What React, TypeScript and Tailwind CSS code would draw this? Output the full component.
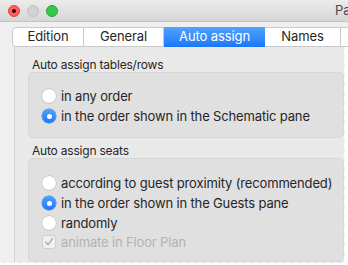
import React from "react";

function Radio({ checked }: { checked?: boolean }) {
  if (checked) {
    return (
      <span className="w-[14px] h-[14px] rounded-full bg-gradient-to-b from-[#4ea1fd] to-[#1a78fa] flex items-center justify-center shrink-0 shadow-[0_0_0_0.5px_#2a74e0]">
        <span className="w-[5px] h-[5px] rounded-full bg-white" />
      </span>
    );
  }
  return (
    <span className="w-[14px] h-[14px] rounded-full bg-white shrink-0 shadow-[0_0_0_0.5px_#b8b8b8,0_0.5px_1px_rgba(0,0,0,0.15)]" />
  );
}

function Row({ checked, label }: { checked?: boolean; label: string }) {
  return (
    <div className="h-[20px] flex items-center gap-[5px] pl-[13px]">
      <Radio checked={checked} />
      <span className="text-[13px] tracking-[-0.15px] text-[#262626] leading-none">{label}</span>
    </div>
  );
}

function Torn() {
  const right: string[] = [];
  const ys = [47, 52, 56, 61, 66, 70, 75, 80, 84, 89, 94, 99, 103, 108, 113, 117, 122, 127, 131, 136, 141, 146, 150, 155, 160, 164, 169, 174, 178, 183, 188, 193, 197, 202, 207, 211, 216, 221, 225, 230, 235, 240, 244, 249, 254, 258, 262];
  ys.forEach((y, i) => right.push(`${i % 2 === 0 ? 345 : 343.5},${y}`));
  const bottom: string[] = [];
  for (let x = 344, i = 0; x >= 0; x -= 4, i++) bottom.push(`${x},${i % 2 === 0 ? 262 : 263.5}`);
  const pts = [`348,47`, ...right, ...bottom, `0,265`, `348,265`].join(" ");
  return (
    <svg className="absolute left-0 top-0 pointer-events-none" width="348" height="265">
      <polygon points={pts} fill="#ffffff" />
    </svg>
  );
}

export default function App() {
  return (
    <div
      className="w-[348px] h-[265px] relative overflow-hidden bg-[#efefef]"
      style={{ fontFamily: "Inter, 'Liberation Sans', sans-serif" }}
    >
      <div className="h-[22px] bg-gradient-to-b from-[#ececec] to-[#d6d6d6] border-b border-[#c4c4c4] flex items-center relative">
        <div className="flex items-center gap-[7px] pl-[8px]">
          <span className="w-[12px] h-[12px] rounded-full bg-[#fc605c] border border-[#e0443e] flex items-center justify-center">
            <span className="w-[4px] h-[4px] rounded-full bg-[#4d0000]" />
          </span>
          <span className="w-[12px] h-[12px] rounded-full bg-[#d2d2d2] border border-[#c2c2c2]" />
          <span className="w-[12px] h-[12px] rounded-full bg-[#34c84a] border border-[#28a43a]" />
        </div>
        <span className="absolute left-[335px] top-[4px] text-[13px] text-[#4a4a4a] leading-none">Pa</span>
      </div>

      <div className="pt-[5px]">
        <div className="flex pl-[12px] relative z-10 h-[20px]">
          <div className="w-[72px] bg-white border border-[#c9c9c9] rounded-l-[4px] flex items-center justify-center text-[13px] tracking-[-0.1px] text-[#262626]">Edition</div>
          <div className="w-[80px] bg-white border-y border-r border-[#c9c9c9] flex items-center justify-center text-[13px] tracking-[-0.1px] text-[#262626]">General</div>
          <div className="w-[101px] bg-gradient-to-b from-[#52a2fd] to-[#1877fa] flex items-center justify-center text-[13px] tracking-[-0.1px] text-white">Auto assign</div>
          <div className="w-[76px] bg-white border-y border-r border-[#c9c9c9] flex items-center justify-center text-[13px] tracking-[-0.1px] text-[#262626]">Names</div>
          <div className="flex-1 bg-white border-y border-[#c9c9c9]" />
        </div>
        <div className="ml-[14px] -mt-[10px] pt-[10px] h-[230px] bg-[#e9e9e9] border-l border-t border-[#d2d2d2]">
          <div className="pl-[13px]">
            <div className="mt-[9px] h-[15px] pl-[4px] flex items-center text-[12px] tracking-[-0.2px] text-[#262626] leading-none">Auto assign tables/rows</div>
            <div className="w-[316px] h-[66px] bg-[#e0e0e0] rounded-[5px] border border-[#d6d6d6] pt-[13px]">
              <Row label="in any order" />
              <Row checked label="in the order shown in the Schematic pane" />
            </div>
            <div className="mt-[6px] h-[14px] pl-[4px] flex items-center text-[12px] tracking-[-0.2px] text-[#262626] leading-none">Auto assign seats</div>
            <div className="w-[316px] h-[104px] bg-[#e0e0e0] rounded-[5px] border border-[#d6d6d6] pt-[14px]">
              <Row label="according to guest proximity (recommended)" />
              <Row checked label="in the order shown in the Guests pane" />
              <Row label="randomly" />
              <div className="h-[18px] flex items-center gap-[5px] pl-[13px]">
                <span className="w-[14px] h-[14px] rounded-[3px] bg-[#f0f0f0] border border-[#cfcfcf] flex items-center justify-center shrink-0">
                  <svg width="10" height="10" viewBox="0 0 10 10">
                    <path d="M1.8 5.2 L4 7.6 L8.4 1.8" fill="none" stroke="#a8a8a8" strokeWidth="1.4" strokeLinecap="round" strokeLinejoin="round" />
                  </svg>
                </span>
                <span className="text-[13px] tracking-[-0.15px] text-[#b3b3b3] leading-none">animate in Floor Plan</span>
              </div>
            </div>
          </div>
        </div>
      </div>
      <Torn />
    </div>
  );
}
